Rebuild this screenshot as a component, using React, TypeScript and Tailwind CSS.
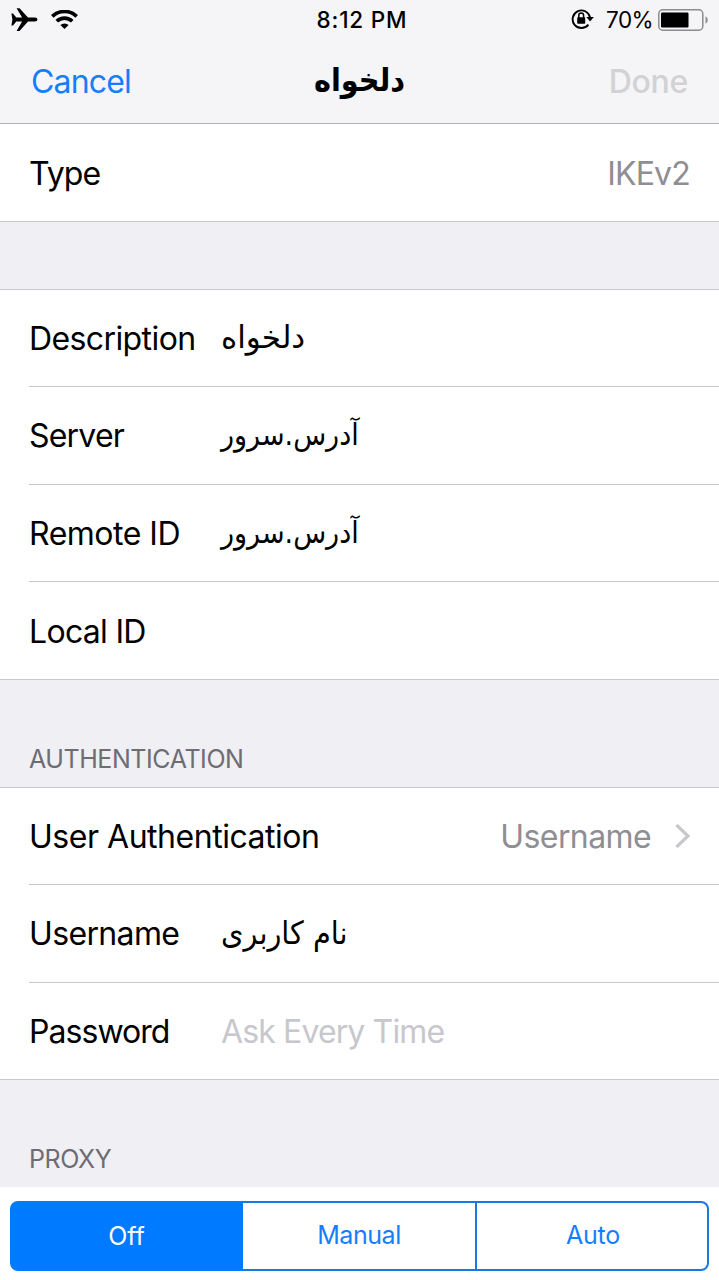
import type { ReactNode } from "react";
import clsx from "clsx";

const FARSI = "font-['DejaVu_Sans',sans-serif]";
const FARSI_CONDENSED = "font-['DejaVu_Sans_Condensed','DejaVu_Sans',sans-serif] [font-stretch:condensed]";

function StatusBar() {
  return (
    <div className="flex h-10 items-center justify-between pl-[11px] pr-[11px]">
      <div className="flex w-[240px] items-center gap-[13px]">
        <svg className="h-6 w-[27px]" viewBox="0 0 27 24" aria-hidden="true">
          <path
            d="M0.4 5.4h1.6l3.3 4 5.8.2L5.6 0.2h2.9l8.5 9.3h6.8c1.6 0 2.6.9 2.6 2s-1 2-2.6 2H17L8.5 22.9H5.6l5.5-9.5-5.8.2-3.3 4H0.4l1-6.1z"
            fill="#000"
          />
        </svg>
        <svg className="h-5 w-[27px]" viewBox="0 0 27 20" aria-hidden="true">
          <g fill="none" stroke="#000" strokeWidth="3.7">
            <path d="M1.3 6.4a17.5 17.5 0 0 1 24.4 0" />
            <path d="M5.8 11.3a11 11 0 0 1 15.4 0" />
          </g>
          <path d="M13.5 19l-4.1-3.9a5.8 5.8 0 0 1 8.2 0z" fill="#000" />
        </svg>
      </div>
      <span className="pl-[5px] text-[22.5px] font-medium tracking-[0.8px]">8:12 PM</span>
      <div className="flex w-[240px] items-center justify-end">
        <svg className="mr-[12px] mb-[2px] h-[22px] w-[23px]" viewBox="0 0 23 22" aria-hidden="true">
          <path
            d="M17.4 16.6a8.8 8.8 0 1 1 1.6-7.4"
            fill="none"
            stroke="#000"
            strokeWidth="1.9"
          />
          <path d="M15.4 9h7.4l-3.7 4.5z" fill="#000" />
          <rect x="6.2" y="9.3" width="8" height="6.4" rx="0.7" fill="#000" />
          <path d="M7.8 10V7.5a2.4 2.4 0 0 1 4.8 0V10" fill="none" stroke="#000" strokeWidth="1.5" />
        </svg>
        <span className="mr-[5px] text-[22.5px] tracking-[-0.6px]">70%</span>
        <svg className="h-[22px] w-[50px]" viewBox="0 0 50 22" aria-hidden="true">
          <rect x="0.8" y="0.8" width="44" height="20.4" rx="4" fill="none" stroke="#8c8c8e" strokeWidth="1.5" />
          <rect x="3" y="3.5" width="27.5" height="15" rx="1.2" fill="#000" />
          <path d="M47.5 7.2c1.4.8 2.2 2 2.2 3.8s-.8 3-2.2 3.8z" fill="#8c8c8e" />
        </svg>
      </div>
    </div>
  );
}

function NavBar() {
  return (
    <div className="flex h-[83px] items-center justify-between pl-[31px] pr-[31px]">
      <button className="w-[180px] text-left text-[32px] tracking-[-0.85px] text-[#157efb]">Cancel</button>
      <h1 dir="rtl" className={clsx("pb-[3px] text-[32px] font-bold", FARSI_CONDENSED)}>
        دلخواه
      </h1>
      <button className="w-[180px] text-right text-[32px] font-medium tracking-[-0.3px] text-[#d2d2d4]">Done</button>
    </div>
  );
}

interface RowProps {
  label: string;
  tracking?: string;
  short?: boolean;
  last?: boolean;
  children?: ReactNode;
}

function Row({ label, tracking, short, last, children }: RowProps) {
  return (
    <div
      className={clsx(
        "bg-white",
        short ? "h-[97px]" : "h-[98px]",
        last ? "border-b border-[#c8c7cc]" : "pl-[29px]",
      )}
    >
      <div
        className={clsx(
          "flex h-full items-center pr-[29px]",
          short || last ? "pt-[2px]" : "pt-px",
          last ? "pl-[29px]" : "border-b border-[#c8c7cc]",
        )}
      >
        <span className={clsx("w-[192px] shrink-0 whitespace-nowrap", tracking)}>{label}</span>
        {children}
      </div>
    </div>
  );
}

function FarsiValue({ className, children }: { className: string; children: string }) {
  return (
    <span dir="rtl" className={clsx("whitespace-nowrap pb-[3px]", className)}>
      {children}
    </span>
  );
}

function SectionHeader({ title, className }: { title?: string; className: string }) {
  return (
    <div
      className={clsx(
        "flex items-end bg-[#efeff4] pl-[29px] text-[25px] leading-[30px] tracking-[-0.43px] text-[#6d6d72]",
        className,
      )}
    >
      {title}
    </div>
  );
}

function ProxyControl() {
  return (
    <div className="h-[93px] bg-white px-[10px] pt-[14px]">
      <div className="flex h-[70px] text-[25px] text-[#157efb]">
        <button className="w-[233px] rounded-l-[8px] bg-[#007aff] pt-[2px] text-white">Off</button>
        <button className="w-[234px] border-y-2 border-r-2 border-[#1879e0] tracking-[-0.45px]">Manual</button>
        <button className="flex-1 rounded-r-[8px] border-y-2 border-r-2 border-[#1879e0] pl-[2px] tracking-[-0.3px]">
          Auto
        </button>
      </div>
    </div>
  );
}

export default function App() {
  return (
    <main className="h-[1280px] w-[719px] overflow-hidden bg-white font-[Inter,'Liberation_Sans',sans-serif] text-[32px] text-black">
      <header className="h-[124px] border-b border-[#b2b2b4] bg-[#f5f5f7]">
        <StatusBar />
        <NavBar />
      </header>

      <Row label="Type" tracking="tracking-[-0.9px]" last>
        <span className="ml-auto tracking-[-0.8px] text-[#8e8e93]">IKEv2</span>
      </Row>

      <SectionHeader className="h-[68px] border-b border-[#c8c7cc]" />

      <Row label="Description" tracking="tracking-[-0.6px]" short>
        <FarsiValue className={clsx("text-[31px]", FARSI)}>دلخواه</FarsiValue>
      </Row>
      <Row label="Server" tracking="tracking-[-0.8px]">
        <FarsiValue className={clsx("text-[30px]", FARSI_CONDENSED)}>آدرس.سرور</FarsiValue>
      </Row>
      <Row label="Remote ID" tracking="tracking-[-0.5px]" short>
        <FarsiValue className={clsx("text-[30px]", FARSI_CONDENSED)}>آدرس.سرور</FarsiValue>
      </Row>
      <Row label="Local ID" tracking="tracking-[-0.7px]" last />

      <SectionHeader title="AUTHENTICATION" className="h-[108px] border-b border-[#c8c7cc] pb-[13px]" />

      <Row label="User Authentication" tracking="tracking-[-0.47px]" short>
        <span className="ml-auto tracking-[-0.6px] text-[#8e8e93]">Username</span>
        <svg className="ml-[24px] mb-[2px] h-6 w-[15px]" viewBox="0 0 15 24" aria-hidden="true">
          <path d="M1.5 1L13 12 1.5 23" fill="none" stroke="#c7c7cc" strokeWidth="3.2" />
        </svg>
      </Row>
      <Row label="Username" tracking="tracking-[-0.65px]">
        <FarsiValue className={clsx("text-[32px]", FARSI_CONDENSED)}>نام کاربری</FarsiValue>
      </Row>
      <Row label="Password" tracking="tracking-[-0.95px]" short last>
        <span className="tracking-[-0.87px] text-[#c7c7cd]">Ask Every Time</span>
      </Row>

      <SectionHeader title="PROXY" className="h-[107px] pb-[13px]" />
      <ProxyControl />
    </main>
  );
}
